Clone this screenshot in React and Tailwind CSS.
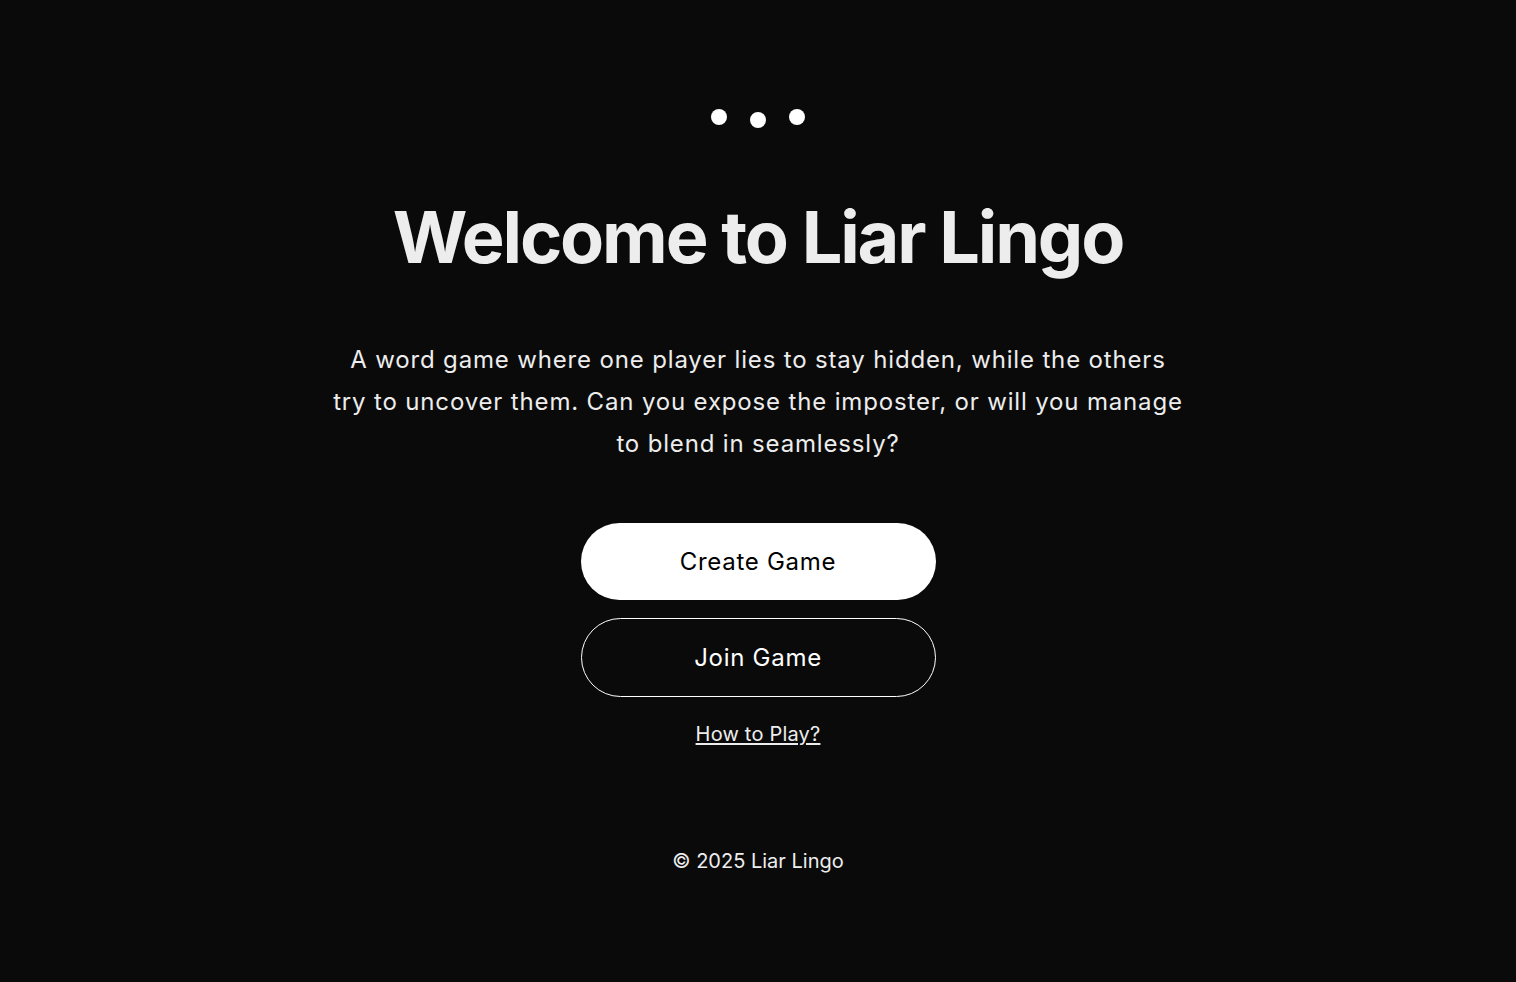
export default function App() {
  return (
    <div className="min-h-screen bg-[#0a0a0a] text-[#ededed] flex flex-col items-center" style={{ fontFamily: 'Inter, "Liberation Sans", sans-serif' }}>
      {/* dots */}
      <div className="mt-[109px] flex items-start gap-[23px]">
        <span className="w-4 h-4 rounded-full bg-white" />
        <span className="w-4 h-4 rounded-full bg-white mt-[3px]" />
        <span className="w-4 h-4 rounded-full bg-white" />
      </div>

      <h1 className="mt-[73px] text-[72px] leading-none font-bold tracking-[-0.03em] text-[#ededed]">
        Welcome to Liar Lingo
      </h1>

      <p className="mt-[66px] max-w-[853px] text-center text-[24px] leading-[42px] tracking-[0.035em] text-[#ededed]">
        A word game where one player lies to stay hidden, while the others try to uncover them. Can you expose the imposter, or will you manage to blend in seamlessly?
      </p>

      <div className="mt-[58px] flex flex-col items-center gap-[18px]">
        <button className="w-[355px] h-[77px] rounded-full bg-white text-black text-[24px] tracking-[0.03em]">
          Create Game
        </button>
        <button className="w-[355px] h-[79px] rounded-full border border-white text-white text-[24px] tracking-[0.03em]">
          Join Game
        </button>
      </div>

      <a href="#" className="mt-[22px] text-[20px] underline underline-offset-2 tracking-[0.01em] text-[#ededed]">
        How to Play?
      </a>

      <footer className="mt-[97px] text-[20px] text-[#ededed]">© 2025 Liar Lingo</footer>
    </div>
  );
}
